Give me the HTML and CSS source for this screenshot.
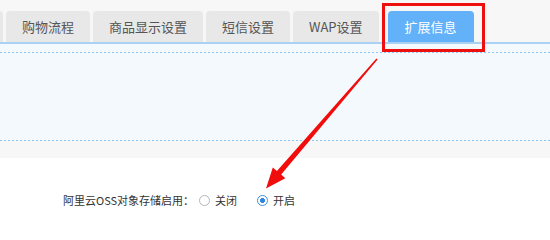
FILE: index.html
```html
<!DOCTYPE html>
<html lang="zh-CN">
<head>
<meta charset="utf-8">
<title>扩展信息</title>
<link rel="stylesheet" href="styles.css">
</head>
<body>
<div class="page">
  <div class="header">
    <nav class="tabs">
      <span class="tab tab-cut" aria-hidden="true"></span>
      <span class="tab">购物流程</span>
      <span class="tab">商品显示设置</span>
      <span class="tab">短信设置</span>
      <span class="tab">WAP设置</span>
      <span class="tab active">扩展信息</span>
    </nav>
    <div class="panel">
      <div class="panel-box"></div>
    </div>
  </div>
  <form class="form">
    <span class="form-label">阿里云OSS对象存储启用：</span>
    <label class="opt"><input type="radio" name="oss" value="0"><span>关闭</span></label>
    <label class="opt"><input type="radio" name="oss" value="1" checked><span>开启</span></label>
  </form>
  <div class="highlight"></div>
  <svg class="arrow" width="550" height="217" viewBox="0 0 550 217" aria-hidden="true">
    <polygon points="376.4,58.6 377.6,59.4 281.2,174.5 285.3,178.3 266,188.5 272.8,167.4 276.9,171.1" fill="#f20d0d"/>
  </svg>
</div>
</body>
</html>
```
FILE: styles.css
```css
* { box-sizing: border-box; }
html, body { margin: 0; padding: 0; background: #fff; }
body { font-family: "Noto Sans CJK SC", "Noto Sans", sans-serif; }

.page {
  position: relative;
  width: 550px;
  height: 217px;
  overflow: hidden;
}

.header {
  background: #f7f7f7;
  padding-bottom: 17px;
}

.tabs {
  display: flex;
  align-items: flex-end;
  gap: 3px;
  height: 42px;
  padding-top: 11px;
  white-space: nowrap;
}

.tab {
  flex: 0 0 auto;
  height: 31px;
  line-height: 31px;
  padding: 0 16px;
  background: #e8e8e8;
  color: #555;
  font-size: 13px;
  border-radius: 4px 4px 0 0;
  text-align: center;
}

.tab-cut { width: 85px; margin-left: -82px; }

.tab.active {
  margin-left: 6px;
  width: 86px;
  background: #63b1f8;
  color: #fff;
}

.panel {
  border-top: 2px solid #a9d1f3;
  background: #f4f9fe;
  padding-top: 8px;
}

.panel-box {
  height: 89px;
  background:
    repeating-linear-gradient(90deg, #8ec6f3 0 2px, transparent 2px 4px) left top / 100% 1px no-repeat,
    repeating-linear-gradient(90deg, #8ec6f3 0 2px, transparent 2px 4px) left bottom / 100% 1px no-repeat;
}

.form {
  display: flex;
  align-items: center;
  height: 20px;
  margin: 32px 0 0;
  padding-left: 63px;
  font-size: 11px;
  color: #333;
}

.form-label { margin-right: 5px; }

.opt {
  display: flex;
  align-items: center;
  margin-right: 20px;
}

.opt input {
  appearance: none;
  -webkit-appearance: none;
  width: 11px;
  height: 11px;
  margin: 0 5px 0 0;
  border: 1px solid #b5b5b5;
  border-radius: 50%;
  background: #fff;
}

.opt input:checked {
  border-color: #3c8fe0;
  background: radial-gradient(circle, #2f86dc 0 2.2px, #fff 2.6px);
}

.highlight {
  position: absolute;
  left: 382px;
  top: 3px;
  width: 103px;
  height: 49px;
  border: 3px solid #ee0f0f;
}

.arrow {
  position: absolute;
  left: 0;
  top: 0;
  pointer-events: none;
}
```
